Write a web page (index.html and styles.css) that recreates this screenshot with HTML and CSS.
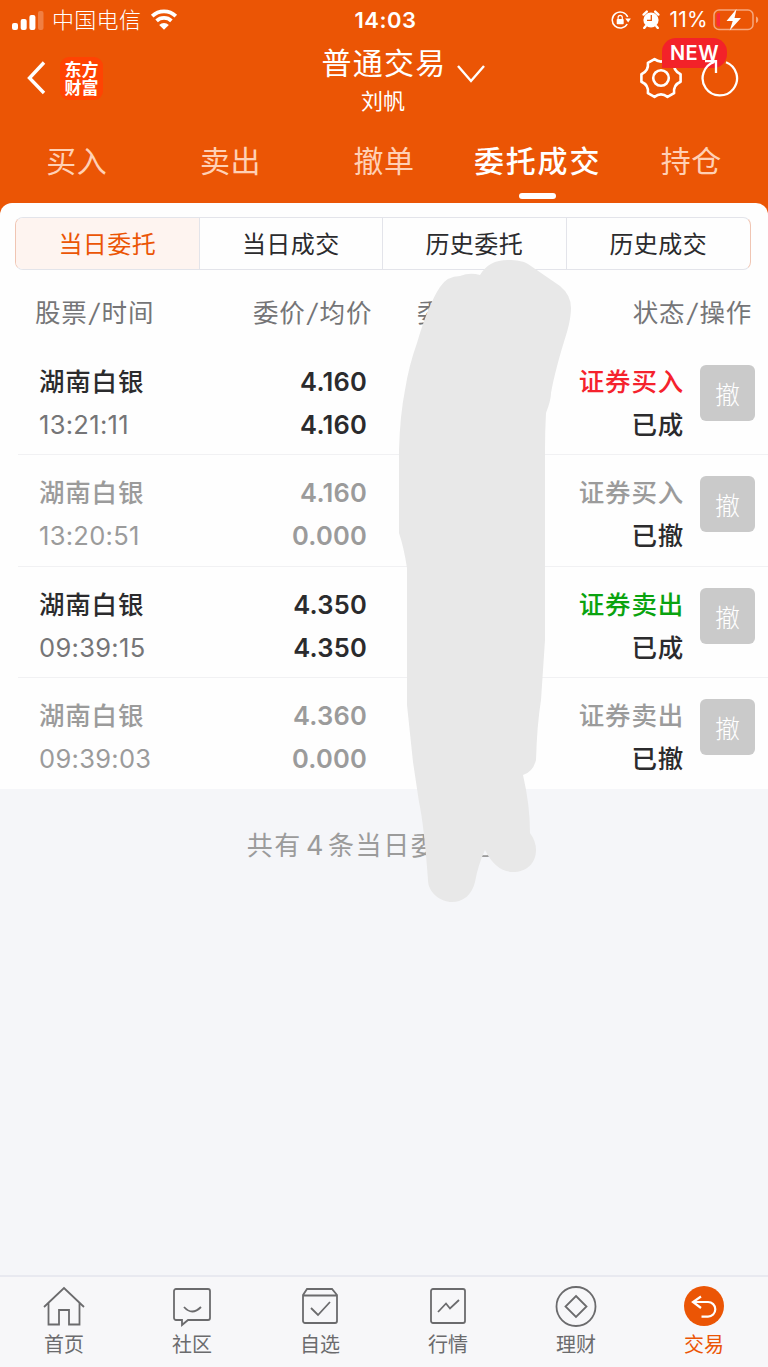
FILE: index.html
```html
<!DOCTYPE html>
<html lang="zh-CN">
<head>
    <meta charset="UTF-8" />
    <meta name="viewport" content="width=device-width, initial-scale=1.0" />
    <title>普通交易 - 委托成交</title>
    <link rel="stylesheet" href="styles.css">
</head>
<body>

<header class="header">
    <div class="status-bar">
        <div class="status-left">
            <svg class="signal" viewBox="0 0 32 20">
                <rect x="0" y="13" width="6" height="7" rx="2" />
                <rect x="8.7" y="9" width="6" height="11" rx="2" />
                <rect x="17.4" y="5" width="6" height="15" rx="2" />
                <rect x="26" y="1" width="5.5" height="19" rx="2" opacity="0.25" />
            </svg>
            <span>中国电信</span>
            <svg class="wifi" viewBox="0 0 28 21">
                <path d="M2.2 7.2a17 17 0 0 1 23.6 0M6.6 11.8a10.8 10.8 0 0 1 14.8 0" fill="none" stroke="#fff" stroke-width="3.7" />
                <path d="M9.2 16a7 7 0 0 1 9.6 0L14 20.8z" fill="#fff" />
            </svg>
        </div>
        <div class="clock">14:03</div>
        <div class="status-right">
            <svg class="lock" viewBox="0 0 20 18">
                <path d="M16.7 6.1A8 8 0 1 0 16.2 13" fill="none" stroke="#fff" stroke-width="1.5" />
                <path d="M14.2 7.500h5.600l-2.600 4z" fill="#fff" />
                <rect x="5.7" y="8" width="7" height="5.3" rx="0.8" fill="#fff" />
                <path d="M7.1 8V6.5a2.1 2.1 0 0 1 4.2 0V8" fill="none" stroke="#fff" stroke-width="1.2" />
            </svg>
            <svg class="alarm" viewBox="0 0 18 19">
                <circle cx="9" cy="10" r="7.6" fill="#fff" />
                <path d="M1.6 4.6l3.2-3M16.4 4.6l-3.2-3M3.6 16.2l-1.4 1.7M14.4 16.2l1.4 1.7" stroke="#fff" stroke-width="2.4" stroke-linecap="round" />
                <path d="M9.3 5v5.3H5" fill="none" stroke="#eb5505" stroke-width="1.3" />
            </svg>
            <span>11%</span>
            <svg class="battery" viewBox="0 0 46 22">
                <rect x="1" y="1" width="39" height="19.5" rx="5" fill="none" stroke="#f6a77d" stroke-width="1.5" />
                <path d="M5 4h2v13.5H5a2 2 0 0 1-1.5-2V6A2 2 0 0 1 5 4z" fill="#fb2c37" />
                <path d="M43 7.5c3 1 3 5.5 0 6.5z" fill="#f6a77d" />
                <path d="M23.500 0L13.500 12h6.200l-3 9.500L28 9h-6.500z" fill="#fff" />
            </svg>
        </div>
    </div>

    <div class="nav-bar">
        <div class="nav-left">
            <svg class="back" viewBox="0 0 20 34">
                <path d="M18 1.500L3.500 17 18 32" />
            </svg>
            <div class="brand">东方<br>财富</div>
        </div>
        <div class="nav-title">
            <h1>普通交易</h1>
            <p>刘帆</p>
            <svg class="arrow" viewBox="0 0 30 20">
                <path d="M2 2l13 15L28 2" />
            </svg>
        </div>
        <div class="nav-right">
            <svg class="gear" viewBox="0 0 42 42">
                <path d="M40.600 17.200V24.800Q33.100 28 34.100 36.100L27.500 39.900Q21 35 14.500 39.900L7.900 36.100Q8.900 28 1.400 24.800V17.200Q8.900 14 7.900 5.900L14.500 2.100Q21 7 27.500 2.100L34.100 5.900Q33.100 14 40.600 17.200Z" />
                <circle cx="21" cy="21" r="7.8" />
            </svg>
            <span class="badge">NEW</span>
            <svg class="refresh" viewBox="0 0 38 42">
                <path d="M25 5.200A17.200 17.200 0 1 1 13.500 4.900" />
                <path d="M4 4.200H15V16" />
            </svg>
        </div>
    </div>

    <nav class="tabs">
        <a>买入</a>
        <a>卖出</a>
        <a>撤单</a>
        <a class="active">委托成交</a>
        <a>持仓</a>
    </nav>
</header>

<main class="panel">
    <div class="segment">
        <span class="selected">当日委托</span>
        <span>当日成交</span>
        <span>历史委托</span>
        <span>历史成交</span>
    </div>

    <div class="list-head">
        <span>股票<i>/</i>时间</span>
        <span>委价<i>/</i>均价</span>
        <span>委</span>
        <span>状态<i>/</i>操作</span>
    </div>

    <div class="orders">
        <div class="order">
            <div class="stock"><b>湖南白银</b><span class="time">13:21:11</span></div>
            <div class="price"><span>4.160</span><span>4.160</span></div>
            <div class="state"><span class="buy">证券买入</span><span>已成</span></div>
            <button class="cancel">撤</button>
        </div>
        <div class="order revoked">
            <div class="stock"><b>湖南白银</b><span class="time">13:20:51</span></div>
            <div class="price"><span>4.160</span><span>0.000</span></div>
            <div class="state"><span class="buy">证券买入</span><span>已撤</span></div>
            <button class="cancel">撤</button>
        </div>
        <div class="order">
            <div class="stock"><b>湖南白银</b><span class="time">09:39:15</span></div>
            <div class="price"><span>4.350</span><span>4.350</span></div>
            <div class="state"><span class="sell">证券卖出</span><span>已成</span></div>
            <button class="cancel">撤</button>
        </div>
        <div class="order revoked">
            <div class="stock"><b>湖南白银</b><span class="time">09:39:03</span></div>
            <div class="price"><span>4.360</span><span>0.000</span></div>
            <div class="state"><span class="sell">证券卖出</span><span>已撤</span></div>
            <button class="cancel">撤</button>
        </div>
    </div>
</main>

<p class="summary">共有<span>4</span>条当日委托记录</p>

<footer class="tab-bar">
    <a>
        <svg viewBox="0 0 42 42">
            <path d="M1 21L21 2l20 19M5.500 17v21.500H16V24h10v14.500h10.500V17" />
        </svg>
        <span>首页</span>
    </a>
    <a>
        <svg viewBox="0 0 42 42">
            <path d="M5 3h32a2 2 0 0 1 2 2v27a2 2 0 0 1-2 2H17l-6 5v-5H5a2 2 0 0 1-2-2V5a2 2 0 0 1 2-2z" />
            <path d="M13 21q8 9 17 0" />
        </svg>
        <span>社区</span>
    </a>
    <a>
        <svg viewBox="0 0 42 42">
            <path d="M8 3h25l5 6v26a2 2 0 0 1-2 2H6a2 2 0 0 1-2-2V9zM4 9.500h34" />
            <path d="M12 22l7 7 12-13" />
        </svg>
        <span>自选</span>
    </a>
    <a>
        <svg viewBox="0 0 42 42">
            <rect x="4" y="3" width="34" height="34" rx="2" />
            <path d="M11 26l8-8.500 4 5L32 14" />
        </svg>
        <span>行情</span>
    </a>
    <a>
        <svg viewBox="0 0 42 42">
            <circle cx="21" cy="20.500" r="19.500" />
            <path d="M21 10l10.500 10.500L21 31 10.500 20.500z" />
        </svg>
        <span>理财</span>
    </a>
    <a class="current">
        <svg viewBox="0 0 42 42">
            <circle cx="21" cy="20" r="20" />
            <path d="M18 10.500L10 16l8 6M10 16h15a7.300 7.300 0 0 1 0 14.600h-6.500" />
        </svg>
        <span>交易</span>
    </a>
</footer>

<svg class="smudge" viewBox="0 0 768 1367">
    <path d="M480 275C486 265 495 260 508 260C517 260 523 261 528 264L560 286Q571 295 571 308Q571 318 567 332Q555 370 551 393Q551 400 546 413Q545 430 545 450V640L541 700Q537 725 536 760Q533 772 523 775Q530 805 530 833Q536 841 536 850C536 864 526 872 513 872Q496 872 485 850Q478 865 475 882C472 895 463 902 452 902C440 902 428 892 428 880Q424 825 419 802L413 762L407 705V568Q404 548 399 533V450Q400 415 405 390Q409 365 417 343Q428 305 440 287Q447 276 460 276Q470 272 480 275Z" />
</svg>

</body>
</html>
```
FILE: styles.css
```css
:root {
    --orange: #eb5505;
    --bg: #f5f6f9;
    --text: #2b2b2d;
    --grey: #757577;
    --light: #9b9b9b;
}

* {
    box-sizing: border-box;
    margin: 0;
    padding: 0;
}

body {
    position: relative;
    display: flex;
    flex-direction: column;
    width: 768px;
    height: 1367px;
    overflow: hidden;
    background: var(--bg);
    color: var(--text);
    font-family: Inter, "Noto Sans CJK SC", sans-serif;
}

/* Header */
.header {
    height: 223px;
    background: var(--orange);
    color: #fff;
}

.status-bar {
    display: grid;
    grid-template-columns: 1fr 100px 1fr;
    align-items: center;
    height: 39px;
    padding: 0 9px 0 12px;
    font-size: 21px;
}

.status-left,
.status-right {
    display: flex;
    align-items: center;
}

.status-left span {
    margin: -3px 9px 0 8px;
    font-size: 22px;
    font-weight: 300;
    letter-spacing: 0.3px;
}

.status-right {
    justify-content: flex-end;
}

.status-right span {
    margin: 0 5px 0 9px;
    letter-spacing: 0.3px;
}

.clock {
    text-align: center;
    font-size: 22px;
    font-weight: 600;
    letter-spacing: 0.5px;
}

.signal {
    width: 32px;
    height: 20px;
    fill: #fff;
}

.wifi {
    width: 28px;
    height: 21px;
}

.lock {
    width: 20px;
    height: 18px;
    margin-right: 11px;
}

.alarm {
    width: 18px;
    height: 19px;
}

.battery {
    width: 46px;
    height: 22px;
}

.nav-bar {
    display: grid;
    grid-template-columns: 1fr 200px 1fr;
    height: 81px;
    padding-top: 1px;
}

.nav-left {
    display: flex;
    align-items: center;
    height: 76px;
    padding-left: 26px;
}

.back {
    width: 20px;
    height: 34px;
    fill: none;
    stroke: #fff;
    stroke-width: 3.4;
}

.brand {
    width: 43px;
    height: 43px;
    margin-left: 14px;
    padding-top: 3px;
    border-radius: 9px;
    background: #ff4303;
    font-family: "Noto Sans CJK SC", sans-serif;
    font-size: 17px;
    font-weight: 700;
    line-height: 18px;
    text-align: center;
}

.nav-title {
    position: relative;
    text-align: center;
}

.nav-title h1 {
    font-size: 30px;
    font-weight: 400;
    line-height: 46px;
    letter-spacing: 1.3px;
}

.nav-title p {
    margin-left: -2px;
    font-size: 22px;
    line-height: 30px;
}

.arrow {
    position: absolute;
    top: 24px;
    left: 172px;
    width: 30px;
    height: 20px;
    fill: none;
    stroke: #fff;
    stroke-width: 2.4;
}

.nav-right {
    position: relative;
    display: flex;
    justify-content: flex-end;
    align-items: center;
    gap: 19px;
    height: 76px;
    padding-right: 29px;
}

.gear {
    width: 42px;
    height: 42px;
    fill: none;
    stroke: #fff;
    stroke-width: 2.6;
    stroke-linejoin: round;
}

.refresh {
    position: relative;
    width: 38px;
    height: 42px;
    fill: none;
    stroke: #fff;
    stroke-width: 2.3;
}

.badge {
    position: absolute;
    top: -2px;
    right: 41px;
    width: 65px;
    height: 30px;
    border-radius: 14px 14px 14px 0;
    background: #f32229;
    font-size: 20px;
    font-weight: 600;
    line-height: 30px;
    letter-spacing: 0.5px;
    text-align: center;
}

.tabs {
    display: grid;
    grid-template-columns: repeat(5, 1fr);
    height: 83px;
}

.tabs a {
    display: flex;
    flex-direction: column;
    align-items: center;
    color: #ffd0b5;
    font-size: 30px;
    line-height: 82px;
    letter-spacing: 0.5px;
}

.tabs .active {
    color: #fff;
    font-weight: 500;
    letter-spacing: 1.8px;
}

.tabs .active::after {
    content: "";
    width: 37px;
    height: 6px;
    margin-top: -9px;
    border-radius: 3px;
    background: #fff;
}

/* Orders */
.panel {
    height: 586px;
    margin-top: -20px;
    padding-top: 14px;
    border-radius: 12px 12px 0 0;
    background: #fefefe;
}

.segment {
    display: grid;
    grid-template-columns: repeat(4, 1fr);
    width: 736px;
    height: 53px;
    margin-left: 15px;
    border: 1px solid #e3e4ea;
    border-right-color: #f0c5b3;
    border-left-color: #f0c5b3;
    border-radius: 8px;
    overflow: hidden;
}

.segment span {
    border-right: 1px solid #e3e4ea;
    font-size: 24px;
    line-height: 53px;
    letter-spacing: 0.4px;
    text-align: center;
}

.segment span:last-child {
    border-right: 0;
}

.segment .selected {
    background: #fef4f0;
    color: var(--orange);
}

.list-head {
    display: grid;
    grid-template-columns: 218px 164px 180px 1fr;
    height: 74px;
    padding: 0 16px 0 35px;
    color: var(--grey);
    font-size: 25.5px;
    line-height: 86px;
    letter-spacing: 0.8px;
}

.list-head i {
    margin: 0 2px;
}

.list-head span:last-child {
    text-align: right;
}

.order {
    display: grid;
    grid-template-columns: 164px 164px 317px 55px;
    height: 111.4px;
    margin-left: 18px;
    padding: 16px 13px 0 21px;
    border-bottom: 1px solid #f1f1f3;
    font-size: 25.5px;
    line-height: 43px;
    letter-spacing: 0.8px;
}

.order:last-child {
    border-bottom: 0;
}

.order div {
    display: flex;
    flex-direction: column;
}

.order b {
    font-weight: 500;
}

.time {
    color: var(--grey);
    letter-spacing: 0.3px;
}

.price {
    align-items: flex-end;
    font-weight: 600;
    letter-spacing: 0.2px;
}

.state {
    align-items: flex-end;
    font-weight: 500;
}

.buy {
    color: #f5222d;
}

.sell {
    color: #0aa30f;
}

.revoked b,
.revoked .time,
.revoked .price,
.revoked .buy,
.revoked .sell {
    color: var(--light);
}

.cancel {
    width: 55px;
    height: 56px;
    margin: 5px 0 0 16px;
    border: 0;
    border-radius: 6px;
    background: #cacaca;
    color: #fff;
    font-family: inherit;
    font-size: 25px;
    font-weight: 300;
}

.summary {
    margin-top: 37px;
    color: var(--light);
    font-size: 26px;
    line-height: 40px;
    letter-spacing: 1.6px;
    text-align: center;
}

.summary span {
    margin: 0 3px 0 4px;
    font-size: 27px;
}

/* Bottom tab bar */
.tab-bar {
    display: grid;
    grid-template-columns: repeat(6, 1fr);
    height: 92px;
    margin-top: auto;
    padding-top: 9px;
    border-top: 2px solid #e8e9f0;
    background: #f7f7f9;
    color: #6b6b6d;
}

.tab-bar a {
    display: flex;
    flex-direction: column;
    align-items: center;
    font-size: 20px;
    line-height: 34px;
}

.tab-bar svg {
    width: 42px;
    height: 42px;
    fill: none;
    stroke: #6b6b6d;
    stroke-width: 1.8;
}

.tab-bar .current {
    color: var(--orange);
}

.current circle {
    fill: var(--orange);
    stroke: none;
}

.current path {
    stroke: #fff;
    stroke-width: 2.2;
}

.smudge {
    position: absolute;
    top: 0;
    left: 0;
    width: 768px;
    height: 1367px;
    fill: #e8e8e8;
    pointer-events: none;
}
```
